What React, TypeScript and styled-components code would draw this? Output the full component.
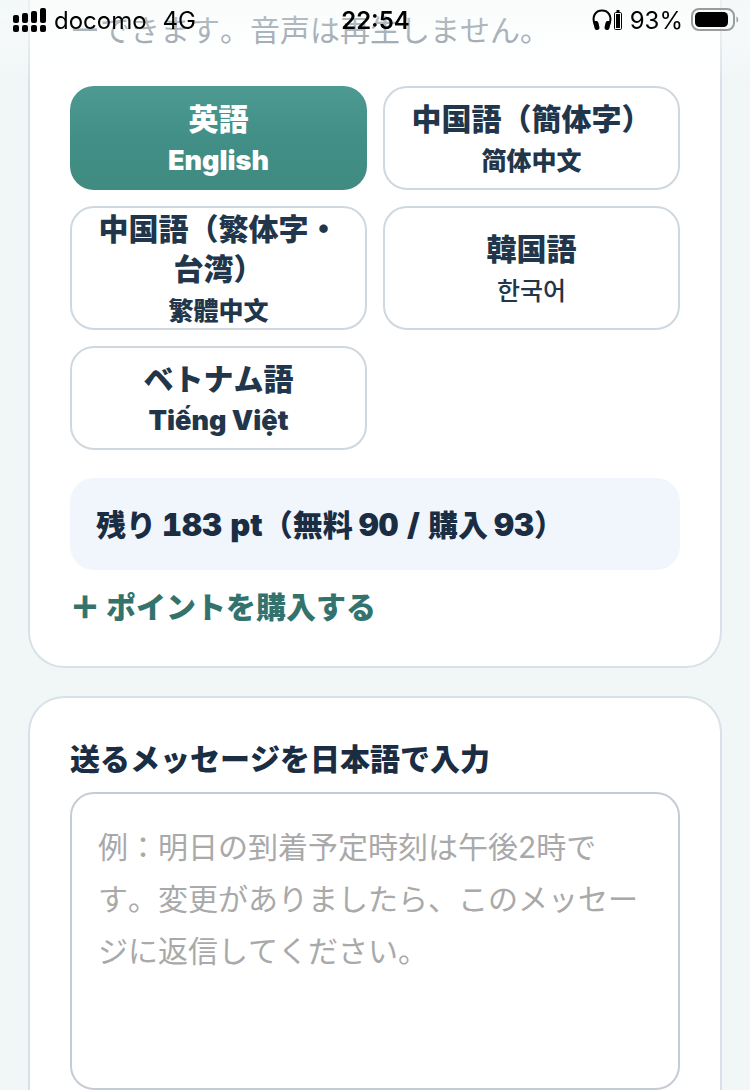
import React, { useState } from "react";
import styled, { createGlobalStyle } from "styled-components";

const GlobalStyle = createGlobalStyle`
  *, *::before, *::after { box-sizing: border-box; }
  body {
    margin: 0;
    background: #f1f6f7;
    color: #1d3147;
    font-family: Inter, "Noto Sans CJK JP", sans-serif;
    font-size: 30px;
    font-kerning: none;
  }
  button, textarea { font: inherit; color: inherit; font-kerning: none; }
`;

const StatusBar = styled.header`
  position: fixed;
  inset: 0 0 auto;
  z-index: 2;
  height: 86px;
  padding: 7px 11px 0 12px;
  display: grid;
  grid-template-columns: 1fr auto 1fr;
  align-items: start;
  background: linear-gradient(rgba(246, 250, 250, 0.6), rgba(252, 254, 254, 0.4) 50%, rgba(255, 255, 255, 0));
  color: #000;
  font-size: 24px;
  line-height: 28px;
  pointer-events: none;
  font-kerning: normal;
`;

const StatusGroup = styled.div<{ $end?: boolean }>`
  display: flex;
  align-items: center;
  gap: 8px;
  height: 28px;
  justify-content: ${(p) => (p.$end ? "flex-end" : "flex-start")};
  svg { margin-bottom: 2px; }
`;

const Network = styled.span`
  margin-left: 8px;
`;

const Clock = styled.time`
  font-weight: 600;
`;

const Page = styled.main`
  min-height: 100vh;
  display: flex;
  flex-direction: column;
  gap: 28px;
  padding: 0 28px;
`;

const Card = styled.section<{ $edge: "top" | "bottom" }>`
  display: flex;
  flex-direction: column;
  background: #fff;
  border: 2px solid #d9e1e8;
  padding: ${(p) => (p.$edge === "top" ? "6px 40px 35px" : "37px 40px 0")};
  ${(p) =>
    p.$edge === "top"
      ? "border-top: 0; border-radius: 0 0 36px 36px;"
      : "border-bottom: 0; border-radius: 36px 36px 0 0; flex: 1;"}
`;

const Hint = styled.p`
  margin: 0 0 32px;
  line-height: 48px;
  color: #6b7885;
`;

const LanguageGrid = styled.div`
  display: grid;
  grid-template-columns: 1fr 1fr;
  gap: 16px;
`;

const LanguageButton = styled.button<{ $active: boolean }>`
  display: flex;
  flex-direction: column;
  align-items: center;
  justify-content: center;
  gap: 5px;
  min-height: 104px;
  padding: 1px 16px 0;
  border: 2px solid ${(p) => (p.$active ? "transparent" : "#cfd8de")};
  border-radius: 24px;
  background: ${(p) => (p.$active ? "linear-gradient(#4c9a91, #418f86 50%, #408b82) border-box" : "#fff")};
  color: ${(p) => (p.$active ? "#fff" : "#22364b")};
  font-weight: 900;
  line-height: 40px;
  cursor: pointer;
`;

const NativeName = styled.span<{ $family?: string; $weight?: number; $size?: number }>`
  font-family: Inter, ${(p) => p.$family ?? '"Noto Sans CJK JP"'}, sans-serif;
  font-size: ${(p) => p.$size ?? 25}px;
  font-weight: ${(p) => p.$weight ?? 900};
  line-height: 34px;
`;

const Balance = styled.p`
  margin: 28px 0 0;
  padding: 23px 26px 21px;
  border-radius: 24px;
  background: #f1f6fd;
  color: #1a2d42;
  font-weight: 900;
  line-height: 48px;
`;

const Figure = styled.span`
  font-size: 31px;
  line-height: 1;
  font-variant-numeric: tabular-nums;
`;

const BuyLink = styled.a`
  align-self: flex-start;
  margin-top: 13px;
  color: #34736d;
  font-weight: 900;
  line-height: 48px;
  text-decoration: none;
  display: flex;
  align-items: center;
  gap: 6px;
`;

const Plus = styled.span`
  -webkit-text-stroke: 1px currentColor;
`;

const MessageLabel = styled.label`
  color: #1a2d42;
  font-weight: 900;
  line-height: 48px;
`;

const MessageBox = styled.textarea`
  flex: 1;
  width: 100%;
  min-height: 240px;
  margin-top: 9px;
  padding: 27px 26px;
  border: 2px solid #c5ccd5;
  border-radius: 24px;
  background: #fff;
  line-height: 52px;
  resize: none;
  outline: none;
  overflow: hidden;
  display: block;
  &::placeholder { color: #a9a9a9; opacity: 1; }
`;

const languages = [
  { id: "en", label: "英語", native: "English", size: 27 },
  { id: "zh-Hans", label: "中国語（簡体字）", native: "简体中文", family: '"Noto Sans CJK SC"' },
  { id: "zh-Hant", label: "中国語（繁体字・台湾）", native: "繁體中文", family: '"Noto Sans CJK TC"' },
  { id: "ko", label: "韓国語", native: "한국어", family: '"Noto Sans CJK KR"', weight: 500 },
  { id: "vi", label: "ベトナム語", native: "Tiếng Việt", size: 27 },
];

const SignalIcon = () => (
  <svg width="34" height="26" viewBox="0 0 34 26" aria-hidden="true">
    {[8, 6, 4, 1].map((top, i) => (
      <g key={i}>
        <rect x={1 + i * 9} y={top} width="6" height={16 - top} rx="2" />
        <rect x={1 + i * 9} y="18" width="6" height="7" rx="2" />
      </g>
    ))}
  </svg>
);

const HeadphonesIcon = () => (
  <svg width="30" height="24" viewBox="0 0 30 24" aria-hidden="true">
    <path d="M3 17C-1 8 4 2.5 10 2.5S21 8 17 17" fill="none" stroke="#000" strokeWidth="2" />
    <rect x="2" y="13" width="5" height="9" rx="2.4" transform="rotate(-12 4.500 17.500)" />
    <rect x="13" y="13" width="5" height="9" rx="2.4" transform="rotate(12 15.500 17.500)" />
    <rect x="22.500" y="4.500" width="7" height="17" rx="1.200" fill="#fff" stroke="#000" />
    <rect x="24" y="6" width="4" height="14" />
    <rect x="24.500" y="2" width="3" height="2" />
  </svg>
);

const BatteryIcon = () => (
  <svg width="48" height="24" viewBox="0 0 48 24" aria-hidden="true">
    <rect x="1" y="1" width="42" height="21" rx="7" fill="none" stroke="#999d9e" strokeWidth="2" />
    <rect x="4" y="4" width="33" height="15" rx="4.500" />
    <path d="M45.500 8.500c2.200 1 2.200 5 0 6z" fill="#999d9e" />
  </svg>
);

export default function App() {
  const [selected, setSelected] = useState("en");
  return (
    <>
      <GlobalStyle />
      <StatusBar>
        <StatusGroup>
          <SignalIcon />
          <span>docomo</span>
          <Network>4G</Network>
        </StatusGroup>
        <Clock>22:54</Clock>
        <StatusGroup $end>
          <HeadphonesIcon />
          <span>93%</span>
          <BatteryIcon />
        </StatusGroup>
      </StatusBar>
      <Page>
        <Card $edge="top">
          <Hint>ーできます。音声は再生しません。</Hint>
          <LanguageGrid>
            {languages.map((l) => (
              <LanguageButton
                key={l.id}
                type="button"
                $active={selected === l.id}
                aria-pressed={selected === l.id}
                onClick={() => setSelected(l.id)}
              >
                <span>{l.label}</span>
                <NativeName lang={l.id} $family={l.family} $weight={l.weight} $size={l.size}>
                  {l.native}
                </NativeName>
              </LanguageButton>
            ))}
          </LanguageGrid>
          <Balance>
            残り <Figure>183 pt</Figure>（無料 <Figure>90 / </Figure>購入 <Figure>93</Figure>）
          </Balance>
          <BuyLink href="#points">
            <Plus>＋</Plus>
            <span>ポイントを購入する</span>
          </BuyLink>
        </Card>
        <Card $edge="bottom">
          <MessageLabel htmlFor="message">送るメッセージを日本語で入力</MessageLabel>
          <MessageBox
            id="message"
            placeholder="例：明日の到着予定時刻は午後2時です。変更がありましたら、このメッセージに返信してください。"
          />
        </Card>
      </Page>
    </>
  );
}
